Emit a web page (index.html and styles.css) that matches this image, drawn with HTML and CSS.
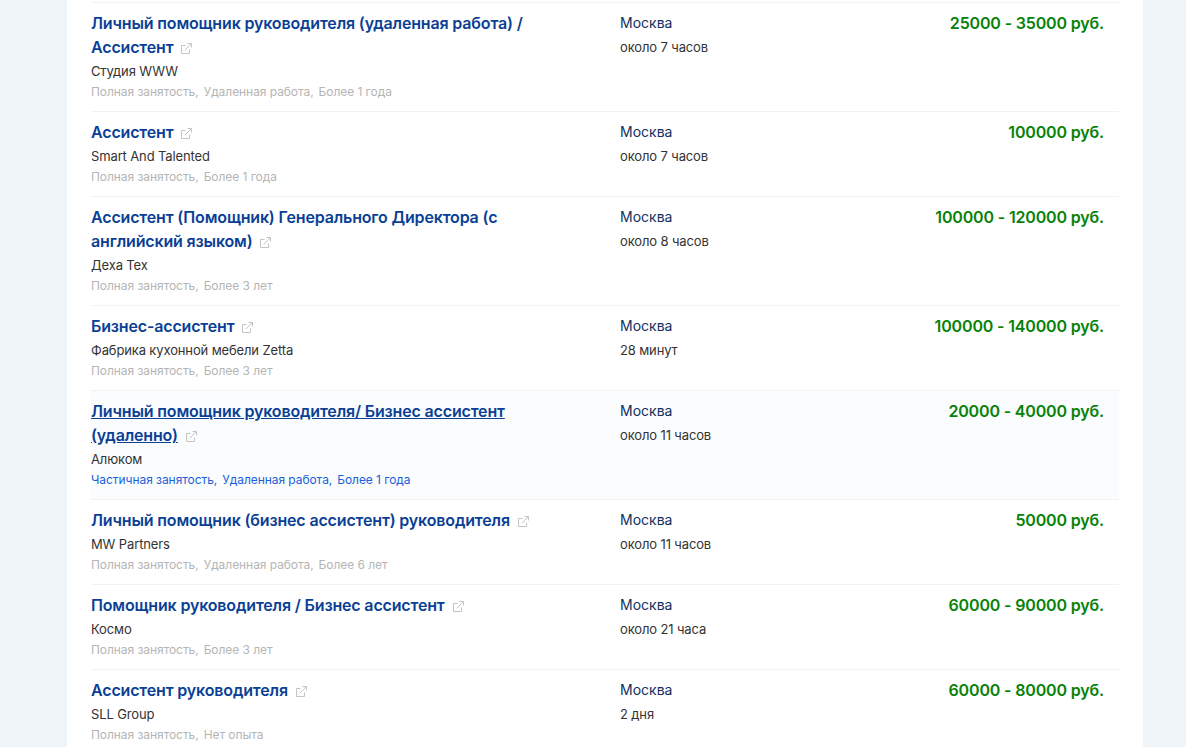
FILE: index.html
```html
<!DOCTYPE html>
<html lang="en">
<head>
  <meta charset="UTF-8" />
  <meta name="viewport" content="width=device-width, initial-scale=1.0" />
  <title>Вакансии</title>
  <link rel="stylesheet" href="styles.css">
</head>
<body>
  <svg class="icon-defs" width="0" height="0" aria-hidden="true">
    <symbol id="ext" viewBox="0 0 11 11">
      <path d="M8.500 6.500v4H.5V2.500h4" fill="none" stroke="currentColor"/>
      <path d="M3.800 7.200 10 1M6.500 .5h4v4" fill="none" stroke="currentColor"/>
    </symbol>
  </svg>
  <main class="card">
    <ul class="vacancy-list">
      <li class="vacancy">
        <div class="vacancy-main">
          <h3 class="vacancy-title"><a href="#">Личный помощник руководителя (удаленная работа) / Ассистент</a><svg class="ext-icon"><use href="#ext"/></svg></h3>
          <div class="company">Студия WWW</div>
          <div class="tags"><span>Полная занятость,</span><span>Удаленная работа,</span><span>Более 1 года</span></div>
        </div>
        <div class="vacancy-place"><div class="city">Москва</div><div class="age">около 7 часов</div></div>
        <div class="salary">25000 - 35000 руб.</div>
      </li>
      <li class="vacancy">
        <div class="vacancy-main">
          <h3 class="vacancy-title"><a href="#">Ассистент</a><svg class="ext-icon"><use href="#ext"/></svg></h3>
          <div class="company">Smart And Talented</div>
          <div class="tags"><span>Полная занятость,</span><span>Более 1 года</span></div>
        </div>
        <div class="vacancy-place"><div class="city">Москва</div><div class="age">около 7 часов</div></div>
        <div class="salary">100000 руб.</div>
      </li>
      <li class="vacancy">
        <div class="vacancy-main">
          <h3 class="vacancy-title"><a href="#">Ассистент (Помощник) Генерального Директора (с английский языком)</a><svg class="ext-icon"><use href="#ext"/></svg></h3>
          <div class="company">Деха Тех</div>
          <div class="tags"><span>Полная занятость,</span><span>Более 3 лет</span></div>
        </div>
        <div class="vacancy-place"><div class="city">Москва</div><div class="age">около 8 часов</div></div>
        <div class="salary">100000 - 120000 руб.</div>
      </li>
      <li class="vacancy">
        <div class="vacancy-main">
          <h3 class="vacancy-title"><a href="#">Бизнес-ассистент</a><svg class="ext-icon"><use href="#ext"/></svg></h3>
          <div class="company">Фабрика кухонной мебели Zetta</div>
          <div class="tags"><span>Полная занятость,</span><span>Более 3 лет</span></div>
        </div>
        <div class="vacancy-place"><div class="city">Москва</div><div class="age">28 минут</div></div>
        <div class="salary">100000 - 140000 руб.</div>
      </li>
      <li class="vacancy is-hover">
        <div class="vacancy-main">
          <h3 class="vacancy-title"><a href="#">Личный помощник руководителя/ Бизнес ассистент (удаленно)</a><svg class="ext-icon"><use href="#ext"/></svg></h3>
          <div class="company">Алюком</div>
          <div class="tags"><span>Частичная занятость,</span><span>Удаленная работа,</span><span>Более 1 года</span></div>
        </div>
        <div class="vacancy-place"><div class="city">Москва</div><div class="age">около 11 часов</div></div>
        <div class="salary">20000 - 40000 руб.</div>
      </li>
      <li class="vacancy">
        <div class="vacancy-main">
          <h3 class="vacancy-title"><a href="#">Личный помощник (бизнес ассистент) руководителя</a><svg class="ext-icon"><use href="#ext"/></svg></h3>
          <div class="company">MW Partners</div>
          <div class="tags"><span>Полная занятость,</span><span>Удаленная работа,</span><span>Более 6 лет</span></div>
        </div>
        <div class="vacancy-place"><div class="city">Москва</div><div class="age">около 11 часов</div></div>
        <div class="salary">50000 руб.</div>
      </li>
      <li class="vacancy">
        <div class="vacancy-main">
          <h3 class="vacancy-title"><a href="#">Помощник руководителя / Бизнес ассистент</a><svg class="ext-icon"><use href="#ext"/></svg></h3>
          <div class="company">Космо</div>
          <div class="tags"><span>Полная занятость,</span><span>Более 3 лет</span></div>
        </div>
        <div class="vacancy-place"><div class="city">Москва</div><div class="age">около 21 часа</div></div>
        <div class="salary">60000 - 90000 руб.</div>
      </li>
      <li class="vacancy">
        <div class="vacancy-main">
          <h3 class="vacancy-title"><a href="#">Ассистент руководителя</a><svg class="ext-icon"><use href="#ext"/></svg></h3>
          <div class="company">SLL Group</div>
          <div class="tags"><span>Полная занятость,</span><span>Нет опыта</span></div>
        </div>
        <div class="vacancy-place"><div class="city">Москва</div><div class="age">2 дня</div></div>
        <div class="salary">60000 - 80000 руб.</div>
      </li>
    </ul>
  </main>
</body>
</html>
```
FILE: styles.css
```css
html, body {
  height: 747px;
  overflow: hidden;
}

body {
  margin: 0;
  background-color: #eff5f9;
  font-family: Inter, 'Liberation Sans', sans-serif;
  color: #333;
}

.icon-defs {
  display: block;
}

.card {
  width: 1076px;
  height: 747px;
  margin-left: 67px;
  padding: 2px 24px 0;
  box-sizing: border-box;
  background-color: #fff;
  overflow: hidden;
}

.vacancy-list {
  list-style: none;
  margin: 0;
  padding: 0;
  width: 1028px;
}

.vacancy {
  display: grid;
  grid-template-columns: 529px 200px 1fr;
  padding: 8px 15px 11px 0;
  border-top: 1px solid #eff3f6;
}

.vacancy.is-hover {
  background-color: #fafcfe;
}

.vacancy-main {
  width: 450px;
}

.vacancy-title {
  margin: 0;
  font-size: 16px;
  line-height: 24px;
  font-weight: 600;
  letter-spacing: -0.01em;
  color: #0b3f95;
}

.vacancy-title a {
  color: inherit;
  text-decoration: none;
}

.is-hover .vacancy-title a {
  text-decoration: underline;
}

.ext-icon {
  width: 11px;
  height: 11px;
  margin-left: 8px;
  vertical-align: -1px;
  color: #c4c4c4;
}

.company {
  font-size: 13px;
  line-height: 24px;
  letter-spacing: -0.01em;
  color: #333;
}

.tags {
  display: flex;
  gap: 5px;
  margin-top: 1px;
  font-size: 12px;
  line-height: 16px;
  letter-spacing: -0.005em;
  color: #b5b5b5;
}

.is-hover .tags {
  color: #1a5fdc;
}

.vacancy-place {
  line-height: 24px;
}

.city {
  font-size: 14px;
  color: #12305f;
}

.age {
  font-size: 13px;
  letter-spacing: -0.01em;
}

.salary {
  text-align: right;
  font-size: 16px;
  line-height: 24px;
  font-weight: 600;
  letter-spacing: -0.01em;
  color: #078207;
}
```
